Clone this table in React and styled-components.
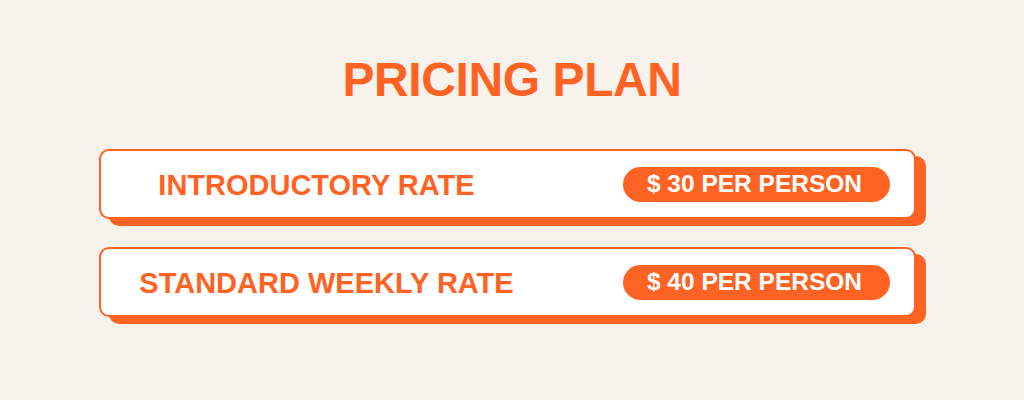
import React from 'react';
import styled, { createGlobalStyle } from 'styled-components';

const ORANGE = '#ff6324';

const GlobalStyle = createGlobalStyle`
  html, body {
    margin: 0;
    padding: 0;
    background: #f7f2eb;
  }
  body {
    font-family: "Liberation Sans", Arial, sans-serif;
  }
`;

const Page = styled.div`
  width: 1024px;
  height: 400px;
  box-sizing: border-box;
  padding-top: 56px;
  background: #f7f2eb;
  overflow: hidden;
`;

const Title = styled.h1`
  margin: 0;
  text-align: center;
  color: ${ORANGE};
  font-family: "Liberation Sans", Arial, sans-serif;
  font-weight: 700;
  font-size: 48px;
  line-height: 48px;
  letter-spacing: -0.4px;
`;

const List = styled.div`
  display: flex;
  flex-direction: column;
  gap: 28px;
  margin-top: 45px;
  padding-left: 99px;
`;

const Card = styled.div`
  width: 817px;
  height: 70px;
  box-sizing: border-box;
  display: flex;
  align-items: center;
  background: #ffffff;
  border: 2px solid ${ORANGE};
  border-radius: 10px;
  box-shadow: 10px 7px 0 ${ORANGE};
  padding-right: 24px;
`;

const Label = styled.div`
  width: 439px;
  text-align: center;
  color: ${ORANGE};
  font-weight: 700;
  font-size: 29px;
  line-height: 1;
  padding-top: 2px;
  margin-left: ${p => p.$shift || 0}px;
  white-space: nowrap;
`;

const Pill = styled.div`
  margin-left: auto;
  width: 267px;
  height: 35px;
  border-radius: 18px;
  background: ${ORANGE};
  color: #ffffff;
  font-weight: 700;
  font-size: 24.5px;
  display: flex;
  align-items: center;
  justify-content: center;
  white-space: nowrap;
  padding-right: 4px;
  box-sizing: border-box;
`;

const rates = [
  { name: 'INTRODUCTORY RATE', price: '$ 30 PER PERSON', shift: -4 },
  { name: 'STANDARD WEEKLY RATE', price: '$ 40 PER PERSON', shift: 6 },
];

const App = () => (
  <Page>
    <GlobalStyle />
    <Title>PRICING PLAN</Title>
    <List>
      {rates.map(r => (
        <Card key={r.name}>
          <Label $shift={r.shift}>{r.name}</Label>
          <Pill>{r.price}</Pill>
        </Card>
      ))}
    </List>
  </Page>
);

export default App;
